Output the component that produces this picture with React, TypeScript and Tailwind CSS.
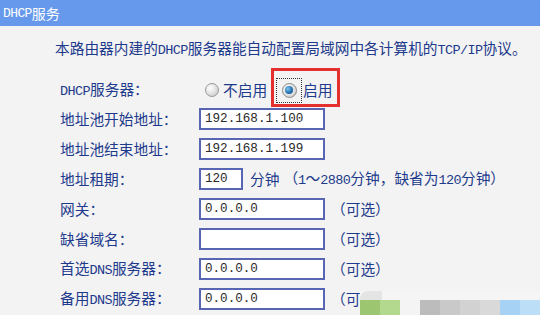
import React from "react";

const L = "font-['Liberation_Mono',monospace] text-[13.5px] tracking-[-0.6px]";

function Field({ value = "", w = "w-[126px]" }: { value?: string; w?: string }) {
  return (
    <div
      className={`${w} h-[22px] shrink-0 border-2 border-[#5865b3] bg-white pl-[4px] flex items-center font-['Liberation_Mono',monospace] text-[12.6px] text-[#2a2a2a]`}
    >
      {value}
    </div>
  );
}

function Row({ label, children }: { label: React.ReactNode; children: React.ReactNode }) {
  return (
    <div className="flex items-center h-[30px]">
      <div className="w-[139px] shrink-0 whitespace-nowrap">{label}</div>
      {children}
    </div>
  );
}

function Opt() {
  return <span className="ml-[6px] whitespace-nowrap">（可选）</span>;
}

function RadioOff() {
  return (
    <div className="w-[14px] h-[14px] rounded-full border border-[#9a9a9a] bg-[radial-gradient(circle_at_35%_35%,#ffffff_0%,#e2e2e2_50%,#bdbdbd_100%)] shrink-0" />
  );
}

function RadioOn() {
  return (
    <div className="w-[15px] h-[15px] rounded-full border border-[#8a8a8a] bg-[radial-gradient(circle_at_35%_35%,#ffffff_0%,#dedede_60%,#b8b8b8_100%)] flex items-center justify-center shrink-0">
      <div className="w-[8px] h-[8px] rounded-full bg-[radial-gradient(circle_at_35%_35%,#7fc4ec_0%,#1f6fae_60%,#0f3f73_100%)]" />
    </div>
  );
}

export default function App() {
  return (
    <div className="w-[540px] h-[315px] bg-[#f3f3f3] relative overflow-hidden font-['Noto_Sans_CJK_SC',sans-serif] text-[14.7px] text-[#1d3a8c] leading-none">
      <div className="h-[26px] bg-[#6699ec] flex items-center pl-[3px] text-white text-[14px]">
        <span className="font-['Liberation_Mono',monospace] text-[13px] tracking-[-0.6px]">DHCP</span>服务
      </div>
      <div className="h-[50px] pl-[55px] pt-[11px] leading-[22px] whitespace-nowrap">
        本路由器内建的<span className={L}>DHCP</span>服务器能自动配置局域网中各计算机的<span className={L}>TCP/IP</span>协议。
      </div>
      <div className="pl-[60px]">
        <div className="flex items-center h-[28px]">
          <div className="w-[139px] shrink-0 whitespace-nowrap">
            <span className={L}>DHCP</span>服务器：
          </div>
          <div className="ml-[6px]">
            <RadioOff />
          </div>
          <span className="ml-[4px]">不启用</span>
          <div className="relative h-full flex items-center ml-[9px]">
            <div className="w-[26px] h-[25px] border border-dotted border-[#333] flex items-center justify-center">
              <RadioOn />
            </div>
            <span className="ml-[1px]">启用</span>
            <div className="absolute top-[-8px] left-[-5px] w-[69px] h-[39px] border-[3px] border-[#e4312f]" />
          </div>
        </div>
        <Row label="地址池开始地址：">
          <Field value="192.168.1.100" />
        </Row>
        <Row label="地址池结束地址：">
          <Field value="192.168.1.199" />
        </Row>
        <Row label="地址租期：">
          <Field value="120" w="w-[44px]" />
          <span className="ml-[7px] whitespace-nowrap">分钟</span>
          <span className="ml-[4px] whitespace-nowrap">
            （<span className={L}>1</span>～<span className={L}>2880</span>分钟，缺省为<span className={L}>120</span>分钟）
          </span>
        </Row>
        <Row label="网关：">
          <Field value="0.0.0.0" />
          <Opt />
        </Row>
        <Row label="缺省域名：">
          <Field value="" />
          <Opt />
        </Row>
        <Row
          label={
            <>
              首选<span className={L}>DNS</span>服务器：
            </>
          }
        >
          <Field value="0.0.0.0" />
          <Opt />
        </Row>
        <Row
          label={
            <>
              备用<span className={L}>DNS</span>服务器：
            </>
          }
        >
          <Field value="0.0.0.0" />
          <Opt />
        </Row>
      </div>
      <div className="absolute left-[360px] top-[291px] w-[180px] h-[24px] flex flex-col">
        <div className="h-[9px] bg-[#f5f5f5] flex">
          <div className="w-[22px] h-full bg-[#e4e4e4] rounded-tl-[8px]" />
        </div>
        <div className="flex flex-1">
          <div className="w-[20px] bg-[#9cc66f]" />
          <div className="w-[20px] bg-[#b2d98d]" />
          <div className="w-[20px] bg-[#f4f4f4]" />
          <div className="w-[20px] bg-[#bcbcbc]" />
          <div className="w-[20px] bg-[#c9c9c9]" />
          <div className="w-[20px] bg-[#d2d2d2]" />
          <div className="w-[20px] bg-[#d9d9d9]" />
          <div className="w-[20px] bg-[#a6d3f5]" />
          <div className="w-[20px] bg-[#bcdef7]" />
        </div>
      </div>
    </div>
  );
}
